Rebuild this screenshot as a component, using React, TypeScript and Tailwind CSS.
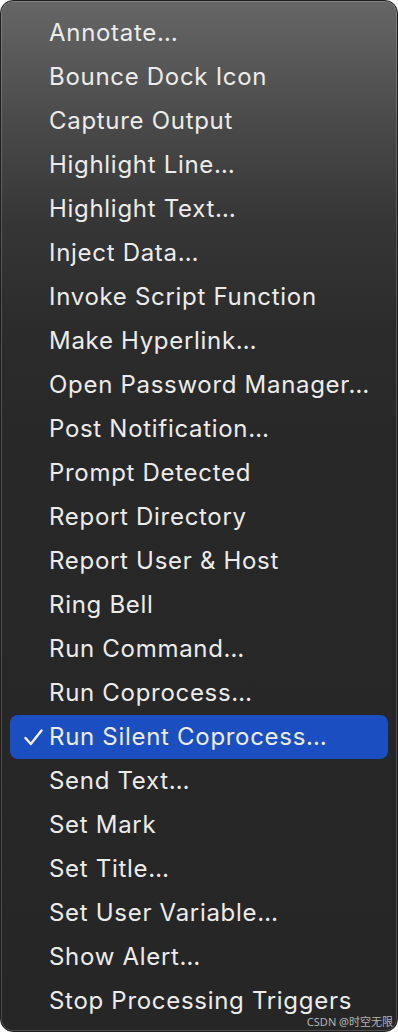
import React from "react";

const items = [
  "Annotate…",
  "Bounce Dock Icon",
  "Capture Output",
  "Highlight Line…",
  "Highlight Text…",
  "Inject Data…",
  "Invoke Script Function",
  "Make Hyperlink…",
  "Open Password Manager…",
  "Post Notification…",
  "Prompt Detected",
  "Report Directory",
  "Report User & Host",
  "Ring Bell",
  "Run Command…",
  "Run Coprocess…",
  "Run Silent Coprocess…",
  "Send Text…",
  "Set Mark",
  "Set Title…",
  "Set User Variable…",
  "Show Alert…",
  "Stop Processing Triggers",
];

export default function App() {
  return (
    <div className="w-[398px] h-[1032px] bg-white relative" style={{ fontFamily: "Inter, 'Noto Sans', sans-serif" }}>
      <div className="w-[398px] h-[1032px] rounded-[13px] border border-[#1e1e1e] bg-[linear-gradient(to_bottom,#666666_0px,#4a4a4a_120px,#363636_220px,#2c2c2c_320px,#282828_440px,#262626_1032px)] shadow-[inset_0_0_0_1px_rgba(255,255,255,0.18)] pt-[10px] px-[9px]">
        {items.map((t) => {
          const sel = t === "Run Silent Coprocess…";
          return (
            <div
              key={t}
              className={`h-[44px] flex items-center rounded-[8px] text-[24px] leading-[24px] tracking-[0.7px] text-[#ececec] ${sel ? "bg-[#1b4fc1]" : ""}`}
            >
              <span className="w-[39px] flex justify-center pl-[8px]">
                {sel && (
                  <svg width="19" height="17" viewBox="0 0 19 17" fill="none">
                    <path d="M1.5 9 L6.8 15 L17.5 1.5" stroke="#f2f2f2" strokeWidth="2.4" strokeLinecap="round" strokeLinejoin="round" />
                  </svg>
                )}
              </span>
              <span>{t}</span>
            </div>
          );
        })}
      </div>
      <div className="absolute right-[5px] bottom-[5px] text-[11px] leading-[11px] text-[#b4b4b4]" style={{ fontFamily: "'Noto Sans', 'Noto Sans CJK SC', sans-serif" }}>
        CSDN @时空无限
      </div>
    </div>
  );
}
